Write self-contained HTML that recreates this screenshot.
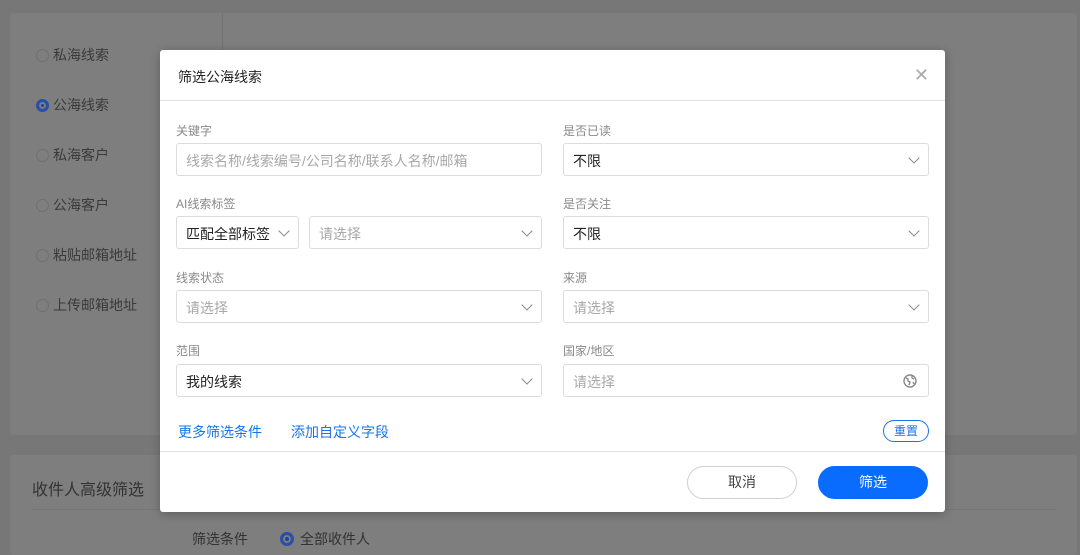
<!DOCTYPE html>
<html><head><meta charset="utf-8"><style>
*{box-sizing:border-box;margin:0;padding:0}
body{width:1080px;height:548px;overflow:hidden;background:#777;font-family:"Liberation Sans","Noto Sans CJK SC",sans-serif;position:relative;font-size:14px}
.card{position:absolute;background:#7e7e7e;border-radius:4px}
.side{position:absolute;color:#3a3a3a;font-size:14px;left:36px}
.side i{display:inline-block;width:13px;height:13px;border:1px solid #707070;border-radius:50%;vertical-align:-2px;margin-right:4px}
.modal{position:absolute;left:160px;top:50px;width:785px;height:462px;background:#fff;border-radius:3px;box-shadow:0 2px 10px rgba(0,0,0,.25)}
.t{position:absolute;left:18px;top:17px;font-size:14px;color:#222}
.x{position:absolute;right:16px;top:15px;color:#aaa;font-size:18px}
.hr{position:absolute;left:0;right:0;height:1px;background:#e3e3e3}
.lb{position:absolute;font-size:12px;color:#8a8a8a}
.in{position:absolute;height:33px;border:1px solid #dcdcdc;border-radius:3px;font-size:14px;color:#222;padding:7px 9px;white-space:nowrap}
.ph{color:#a8a8a8}
.ar{position:absolute;right:10px;top:10px;width:8px;height:8px;border-right:1.5px solid #888;border-bottom:1.5px solid #888;transform:rotate(45deg)}
.lk{position:absolute;top:372px;color:#1a73e8;font-size:14px}
.btn{position:absolute;top:416px;width:110px;height:33px;border-radius:17px;text-align:center;line-height:31px;font-size:14px}
</style></head><body>
<div class="card" style="left:10px;top:13px;width:1067px;height:422px"></div>
<div style="position:absolute;left:222px;top:13px;width:1px;height:422px;background:#727272"></div>
<div class="card" style="left:10px;top:455px;width:1067px;height:100px"></div>
<div class="side" style="top:45px"><i></i>私海线索</div>
<div class="side" style="top:95px"><i style="border:3px solid #2a4fa8;background:#1e40a0;box-shadow:inset 0 0 0 2px #7e7e7e"></i>公海线索</div>
<div class="side" style="top:145px"><i></i>私海客户</div>
<div class="side" style="top:195px"><i></i>公海客户</div>
<div class="side" style="top:245px"><i></i>粘贴邮箱地址</div>
<div class="side" style="top:295px"><i></i>上传邮箱地址</div>
<div style="position:absolute;left:32px;top:476px;font-size:16px;color:#333">收件人高级筛选</div>
<div style="position:absolute;left:32px;top:509px;width:1025px;height:1px;background:#767676"></div>
<div style="position:absolute;left:192px;top:529px;color:#333">筛选条件</div>
<div style="position:absolute;left:280px;top:529px;color:#333"><i style="display:inline-block;width:14px;height:14px;border:3px solid #2a4fa8;border-radius:50%;background:#1e40a0;box-shadow:inset 0 0 0 2px #7e7e7e;vertical-align:-2px;margin-right:6px"></i>全部收件人</div>

<div class="modal">
<div class="t">筛选公海线索</div><div class="x">✕</div>
<div class="hr" style="top:50px"></div>
<div class="lb" style="left:16px;top:72px">关键字</div>
<div class="in" style="left:16px;top:93px;width:366px"><span class="ph">线索名称/线索编号/公司名称/联系人名称/邮箱</span></div>
<div class="lb" style="left:403px;top:72px">是否已读</div>
<div class="in" style="left:403px;top:93px;width:366px">不限<span class="ar"></span></div>
<div class="lb" style="left:16px;top:145px">AI线索标签</div>
<div class="in" style="left:16px;top:166px;width:123px">匹配全部标签<span class="ar"></span></div>
<div class="in" style="left:149px;top:166px;width:233px"><span class="ph">请选择</span><span class="ar"></span></div>
<div class="lb" style="left:403px;top:145px">是否关注</div>
<div class="in" style="left:403px;top:166px;width:366px">不限<span class="ar"></span></div>
<div class="lb" style="left:16px;top:219px">线索状态</div>
<div class="in" style="left:16px;top:240px;width:366px"><span class="ph">请选择</span><span class="ar"></span></div>
<div class="lb" style="left:403px;top:219px">来源</div>
<div class="in" style="left:403px;top:240px;width:366px"><span class="ph">请选择</span><span class="ar"></span></div>
<div class="lb" style="left:16px;top:292px">范围</div>
<div class="in" style="left:16px;top:314px;width:366px">我的线索<span class="ar"></span></div>
<div class="lb" style="left:403px;top:292px">国家/地区</div>
<div class="in" style="left:403px;top:314px;width:366px"><span class="ph">请选择</span>
<svg style="position:absolute;right:11px;top:9px" width="14" height="14" viewBox="0 0 14 14"><circle cx="7" cy="7" r="6" fill="none" stroke="#888" stroke-width="1.4"/><path d="M3 4l2 1 0 2 2 1-1 3M9 2l0 2 2 1M10 8l1 2" stroke="#888" stroke-width="1.4" fill="none"/></svg></div>
<div class="lk" style="left:18px">更多筛选条件</div>
<div class="lk" style="left:131px">添加自定义字段</div>
<div style="position:absolute;left:723px;top:370px;width:46px;height:22px;border:1px solid #1a73e8;border-radius:11px;color:#1a73e8;font-size:12px;text-align:center;line-height:20px">重置</div>
<div class="hr" style="top:401px"></div>
<div class="btn" style="left:527px;border:1px solid #cfcfcf;color:#444">取消</div>
<div class="btn" style="left:658px;background:#0a6cff;color:#fff;border:1px solid #0a6cff">筛选</div>
</div>
</body></html>
